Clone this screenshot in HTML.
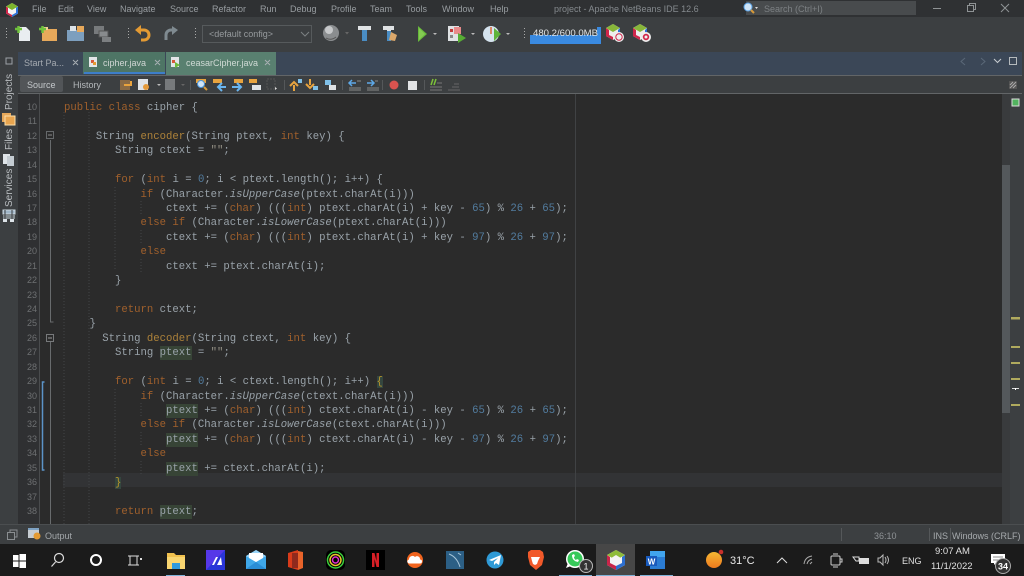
<!DOCTYPE html>
<html><head><meta charset="utf-8">
<style>
html,body{margin:0;padding:0;background:#2b2b2b}
#p{position:relative;width:1024px;height:576px;overflow:hidden;background:#2b2b2b;font-family:"Liberation Sans",sans-serif;filter:blur(.35px)}
.a{position:absolute}
.t{position:absolute;white-space:pre;color:#989da1;font-size:9px;line-height:12px}
.l{position:absolute;left:64px;height:14px;white-space:pre;font:10.63px/14px "Liberation Mono",monospace;color:#99a2a9}
.k{color:#a0602c}.n{color:#527c9f}.f{color:#ad823a}.i{font-style:italic}.s{color:#969286}
.h{background:#374436;display:inline-block;height:14px}
.b{background:#34463f;color:#b8962a}
.g{position:absolute;left:18px;width:19px;text-align:right;font:9px/14px "Liberation Sans",sans-serif;color:#6e7072}
.v{position:absolute;transform:rotate(-90deg);transform-origin:left top;white-space:nowrap;font-size:10px;line-height:12px;color:#b8bcbf}
svg{position:absolute;left:0;top:0}
</style></head><body><div id="p">

<!-- chrome backgrounds -->
<div class="a" style="left:0;top:0;width:1024px;height:17px;background:#2f3133"></div>
<div class="a" style="left:0;top:17px;width:1024px;height:35px;background:#3c3f41"></div>
<div class="a" style="left:0;top:52px;width:1024px;height:23px;background:#3b4757"></div>
<div class="a" style="left:0;top:52px;width:18px;height:490px;background:#3c3f41"></div>
<div class="a" style="left:83px;top:52px;width:82px;height:22px;background:#4e7565"></div>
<div class="a" style="left:84px;top:72px;width:81px;height:2px;background:#3d7ec9"></div>
<div class="a" style="left:166px;top:52px;width:110px;height:23px;background:#598070"></div>
<div class="a" style="left:18px;top:75px;width:1006px;height:19px;background:#3c3f41;border-top:1px solid #626567;border-bottom:1px solid #626567;box-sizing:border-box"></div>
<div class="a" style="left:20px;top:76px;width:43px;height:16px;background:#525558;border-radius:2px"></div>
<div class="a" style="left:18px;top:94px;width:22px;height:430px;background:#2f3032;border-right:1px solid #4a4c4e;box-sizing:border-box"></div>
<div class="a" style="left:40px;top:94px;width:962px;height:430px;background:#2b2b2b"></div>
<div class="a" style="left:63px;top:473px;width:940px;height:14px;background:#323335"></div>
<div class="a" style="left:575px;top:94px;width:1px;height:430px;background:#404244"></div>
<div class="a" style="left:1002px;top:94px;width:8px;height:430px;background:#393b3d"></div>
<div class="a" style="left:1002px;top:165px;width:8px;height:248px;background:#54585b"></div>
<div class="a" style="left:1010px;top:94px;width:14px;height:430px;background:#3c3f41"></div>
<div class="a" style="left:1022px;top:52px;width:2px;height:490px;background:#3c3f41"></div>
<div class="a" style="left:0;top:524px;width:1024px;height:20px;background:#3c3f41;border-top:1px solid #4b4e50;box-sizing:border-box"></div>
<div class="a" style="left:0;top:544px;width:1024px;height:32px;background:#1b1b1b"></div>
<div class="a" style="left:596px;top:544px;width:39px;height:32px;background:#474747"></div>
<div class="a" style="left:746px;top:1px;width:170px;height:14px;background:#484b4d"></div>
<div class="a" style="left:530px;top:27px;width:70px;height:17px;background:#3c3f41"></div>
<div class="a" style="left:530px;top:35px;width:71px;height:9px;background:#3a8ae0"></div>
<div class="a" style="left:597px;top:27px;width:4px;height:9px;background:#3a8ae0"></div>

<!-- menu -->
<div class="t" style="left:32px;top:3px">File</div>
<div class="t" style="left:58px;top:3px">Edit</div>
<div class="t" style="left:87px;top:3px">View</div>
<div class="t" style="left:120px;top:3px">Navigate</div>
<div class="t" style="left:170px;top:3px">Source</div>
<div class="t" style="left:212px;top:3px">Refactor</div>
<div class="t" style="left:260px;top:3px">Run</div>
<div class="t" style="left:290px;top:3px">Debug</div>
<div class="t" style="left:331px;top:3px">Profile</div>
<div class="t" style="left:370px;top:3px">Team</div>
<div class="t" style="left:406px;top:3px">Tools</div>
<div class="t" style="left:442px;top:3px">Window</div>
<div class="t" style="left:490px;top:3px">Help</div>
<div class="t" style="left:554px;top:3px;color:#858a8e">project - Apache NetBeans IDE 12.6</div>
<div class="t" style="left:764px;top:3px;color:#7d8184">Search (Ctrl+I)</div>

<!-- config combo -->
<div class="a" style="left:202px;top:25px;width:108px;height:16px;border:1px solid #565a5c;box-sizing:content-box;background:#3c3f41"></div>
<div class="t" style="left:209px;top:28px;color:#969a9d">&lt;default config&gt;</div>
<div class="t" style="left:533px;top:28px;color:#dfe3e6;font-size:9.600px">480.2/600.0MB</div>

<!-- tabs -->
<div class="t" style="left:24px;top:57px;color:#a5aab0">Start Pa...</div>
<div class="t" style="left:103px;top:57px;color:#d0d6d4">cipher.java</div>
<div class="t" style="left:186px;top:57px;color:#d0dad5">ceasarCipher.java</div>
<div class="t" style="left:27px;top:79px;color:#c4c8cb">Source</div>
<div class="t" style="left:73px;top:79px;color:#b5b9bc">History</div>

<!-- side -->
<div class="v" style="left:4px;top:110px">Projects</div>
<div class="v" style="left:4px;top:150px">Files</div>
<div class="v" style="left:4px;top:207px">Services</div>

<!-- output/status -->
<div class="t" style="left:45px;top:530px;color:#a3a7aa">Output</div>
<div class="t" style="left:874px;top:530px;color:#8f9396">36:10</div>
<div class="t" style="left:933px;top:530px;color:#a6aaad">INS</div>
<div class="t" style="left:952px;top:530px;color:#a6aaad">Windows (CRLF)</div>

<!-- line numbers -->
<div class="g" style="top:100px">10</div><div class="g" style="top:114px">11</div><div class="g" style="top:129px">12</div><div class="g" style="top:143px">13</div><div class="g" style="top:158px">14</div><div class="g" style="top:172px">15</div><div class="g" style="top:187px">16</div><div class="g" style="top:201px">17</div><div class="g" style="top:215px">18</div><div class="g" style="top:230px">19</div><div class="g" style="top:244px">20</div><div class="g" style="top:259px">21</div><div class="g" style="top:273px">22</div><div class="g" style="top:288px">23</div><div class="g" style="top:302px">24</div><div class="g" style="top:316px">25</div><div class="g" style="top:331px">26</div><div class="g" style="top:345px">27</div><div class="g" style="top:360px">28</div><div class="g" style="top:374px">29</div><div class="g" style="top:389px">30</div><div class="g" style="top:403px">31</div><div class="g" style="top:417px">32</div><div class="g" style="top:432px">33</div><div class="g" style="top:446px">34</div><div class="g" style="top:461px">35</div><div class="g" style="top:475px">36</div><div class="g" style="top:490px">37</div><div class="g" style="top:504px">38</div>

<!-- code -->
<div class="l" style="top:101px"><span class="k">public class</span> cipher {</div>
<div class="l" style="top:130px">     String <span class="f">encoder</span>(String ptext, <span class="k">int</span> key) {</div>
<div class="l" style="top:144px">        String ctext = <span class="s">""</span>;</div>
<div class="l" style="top:173px">        <span class="k">for</span> (<span class="k">int</span> i = <span class="n">0</span>; i &lt; ptext.length(); i++) {</div>
<div class="l" style="top:188px">            <span class="k">if</span> (Character.<span class="i">isUpperCase</span>(ptext.charAt(i)))</div>
<div class="l" style="top:202px">                ctext += (<span class="k">char</span>) (((<span class="k">int</span>) ptext.charAt(i) + key - <span class="n">65</span>) % <span class="n">26</span> + <span class="n">65</span>);</div>
<div class="l" style="top:216px">            <span class="k">else if</span> (Character.<span class="i">isLowerCase</span>(ptext.charAt(i)))</div>
<div class="l" style="top:231px">                ctext += (<span class="k">char</span>) (((<span class="k">int</span>) ptext.charAt(i) + key - <span class="n">97</span>) % <span class="n">26</span> + <span class="n">97</span>);</div>
<div class="l" style="top:245px">            <span class="k">else</span></div>
<div class="l" style="top:260px">                ctext += ptext.charAt(i);</div>
<div class="l" style="top:274px">        }</div>
<div class="l" style="top:303px">        <span class="k">return</span> ctext;</div>
<div class="l" style="top:317px">    }</div>
<div class="l" style="top:332px">      String <span class="f">decoder</span>(String ctext, <span class="k">int</span> key) {</div>
<div class="l" style="top:346px">        String <span class="h">ptext</span> = <span class="s">""</span>;</div>
<div class="l" style="top:375px">        <span class="k">for</span> (<span class="k">int</span> i = <span class="n">0</span>; i &lt; ctext.length(); i++) <span class="b">{</span></div>
<div class="l" style="top:390px">            <span class="k">if</span> (Character.<span class="i">isUpperCase</span>(ctext.charAt(i)))</div>
<div class="l" style="top:404px">                <span class="h">ptext</span> += (<span class="k">char</span>) (((<span class="k">int</span>) ctext.charAt(i) - key - <span class="n">65</span>) % <span class="n">26</span> + <span class="n">65</span>);</div>
<div class="l" style="top:418px">            <span class="k">else if</span> (Character.<span class="i">isLowerCase</span>(ctext.charAt(i)))</div>
<div class="l" style="top:433px">                <span class="h">ptext</span> += (<span class="k">char</span>) (((<span class="k">int</span>) ctext.charAt(i) - key - <span class="n">97</span>) % <span class="n">26</span> + <span class="n">97</span>);</div>
<div class="l" style="top:447px">            <span class="k">else</span></div>
<div class="l" style="top:462px">                <span class="h">ptext</span> += ctext.charAt(i);</div>
<div class="l" style="top:476px">        <span class="b">}</span></div>
<div class="l" style="top:505px">        <span class="k">return</span> <span class="h">ptext</span>;</div>

<!-- taskbar text -->
<div class="t" style="left:730px;top:555px;color:#e8e8e8;font-size:11px">31°C</div>
<div class="t" style="left:902px;top:555px;color:#e0e0e0;font-size:9px">ENG</div>
<div class="t" style="left:935px;top:546px;color:#e0e0e0;font-size:9.500px">9:07 AM</div>
<div class="t" style="left:931px;top:561px;color:#e0e0e0;font-size:9.500px">11/1/2022</div>

<svg width="1024" height="576" viewBox="0 0 1024 576">
<!-- NB logo -->
<g id="nb"><path d="M12 3l6 3.500v7L12 17l-6-3.500v-7z" fill="#f4f4f4"/><path d="M12 3l6 3.500-6 3.500-6-3.500z" fill="#7db52d"/><path d="M6 6.500l2 1.200v5l4 2.300V17l-6-3.500z" fill="#d0264a"/><path d="M18 6.500v7L12 17v-2l4-2.300v-5z" fill="#2d72d9"/></g>
<!-- window controls -->
<path d="M933 8.500h8" stroke="#8f9395"/>
<path d="M967.500 5.500h6v6h-6zM969.500 5.500v-2h6v6h-2" fill="none" stroke="#8f9395"/>
<path d="M1001 4l8 8M1009 4l-8 8" stroke="#8f9395"/>
<circle cx="748" cy="7" r="4" fill="#cfe4f7" stroke="#5ca3e6"/><path d="M751 10l3 3" stroke="#d79a3a" stroke-width="2"/><path d="M755 7h3l-1.500 2z" fill="#ddd"/>
<!-- toolbar grips -->
<path d="M6 28v1M6 31v1M6 34v1M6 37v1M128 28v1M128 31v1M128 34v1M128 37v1M195 28v1M195 31v1M195 34v1M195 37v1M524 28v1M524 31v1M524 34v1M524 37v1" stroke="#aaa" transform="translate(.5 0)"/>
<!-- new file -->
<path d="M19 27h7l4 4v10H19z" fill="#e9edf0"/><path d="M15 29h7M18.500 26v7" stroke="#6fc13c" stroke-width="2.500"/>
<!-- new project -->
<path d="M42 29h15v12H42z" fill="#e7a95b"/><path d="M42 27h6v3h-6z" fill="#f3cf94"/><path d="M39 29h7M42.500 26v7" stroke="#6fc13c" stroke-width="2.500"/>
<!-- open project -->
<path d="M67 30h17v11H67z" fill="#7d9fbe"/><path d="M70 26h6v5h-6z" fill="#dde3e8"/><path d="M77 26h7v6h-7z" fill="#e7a95b"/>
<!-- save all (disabled) -->
<path d="M94 26h10v8H94z" fill="#777a7c"/><path d="M99 31h9v6h-9z" fill="#888b8d" stroke="#555"/><path d="M102 37h9v5h-9z" fill="#7c7f81"/>
<!-- undo / redo -->
<path d="M138 30h6a5 5 0 0 1 0 10h-3" fill="none" stroke="#e39a33" stroke-width="3"/><path d="M141 25l-6 5 6 5z" fill="#e39a33"/>
<path d="M176 30h-5a5 5 0 0 0-5 5v5" fill="none" stroke="#7f8a90" stroke-width="3"/><path d="M172 26l6 4-6 5z" fill="#7f8a90"/>
<!-- combo arrow -->
<path d="M301 32l4 4 4-4" fill="none" stroke="#7c8083"/>
<!-- globe -->
<circle cx="331" cy="33" r="8" fill="#8a8d8f"/><circle cx="329" cy="30" r="4" fill="#c6c8ca"/><path d="M326 38q5 3 10-1" stroke="#555" fill="none"/>
<path d="M345 32h4l-2 2.500z" fill="#666"/>
<!-- hammer -->
<path d="M358 26h13v4h-4v1h-5v-1h-4z" fill="#e0e3e5"/><rect x="362" y="30" width="5" height="11" fill="#4a8dc4"/>
<!-- clean -->
<path d="M383 26h11v4h-3v1h-4v-1h-4z" fill="#dfe2e4"/><rect x="387" y="31" width="4" height="10" fill="#4a8dc4"/><path d="M391 32l6 3-2 6-6-1z" fill="#dba86b"/>
<!-- run -->
<path d="M418 26l9 8-9 8z" fill="#67b93b"/><path d="M419 28l6 6-6 6z" fill="#a2dc6a" opacity=".5"/>
<path d="M433 33h4l-2 2z M471 33h4l-2 2z M506 33h4l-2 2z" fill="#bbb"/>
<!-- debug -->
<rect x="448" y="26" width="11" height="15" fill="#dfe2e4"/><rect x="450" y="29" width="3" height="3" fill="#c43a3a"/><path d="M454 27h7v7h-7z" fill="#e88a8a"/><rect x="450" y="35" width="3" height="3" fill="#888"/><path d="M458 33l8 5-8 5z" fill="#57ad34"/>
<!-- profile -->
<circle cx="491" cy="34" r="8" fill="#d6e4ef"/><path d="M491 27v7" stroke="#d86a3a" stroke-width="1.500"/><path d="M494 28l7 6-7 7z" fill="#5eb43a"/>
<!-- small cubes -->
<g transform="translate(604 22)"><path d="M9 2l7 4v8l-7 4-7-4V6z" fill="#eee"/><path d="M9 2l7 4-7 4-7-4z" fill="#87b63a"/><path d="M2 6l3 2v5l4 2v3l-7-4z" fill="#d0264a"/><path d="M16 6v8l-2 1V8z" fill="#2d72d9"/><circle cx="15" cy="15" r="5" fill="#eee"/><circle cx="15" cy="15" r="3.200" fill="none" stroke="#d0264a"/></g>
<g transform="translate(631 22)"><path d="M9 2l7 4v8l-7 4-7-4V6z" fill="#eee"/><path d="M9 2l7 4-7 4-7-4z" fill="#87b63a"/><path d="M2 6l3 2v5l4 2v3l-7-4z" fill="#d0264a"/><path d="M16 6v8l-2 1V8z" fill="#2d72d9"/><circle cx="15" cy="15" r="5" fill="#eee"/><circle cx="15" cy="15" r="3.200" fill="#d0264a"/><circle cx="15" cy="15" r="1.500" fill="#eee"/></g>
<!-- tab row -->
<path d="M6 58h6v6H6z" fill="none" stroke="#9da2a6"/>
<path d="M73 60l5 5M78 60l-5 5M155 60l5 5M160 60l-5 5M265 60l5 5M270 60l-5 5" stroke="#a9b0b4"/>
<rect x="89" y="57" width="8" height="10" fill="#e3e6e8"/><rect x="91" y="60" width="3" height="3" fill="#d65a3a"/><rect x="93" y="62" width="3" height="3" fill="#e39a33"/>
<rect x="171" y="57" width="8" height="10" fill="#e3e6e8"/><rect x="172" y="60" width="3" height="3" fill="#d65a3a"/><path d="M175 62l5 3-5 3z" fill="#6dbb3a"/>
<path d="M965 58l-4 3.500 4 3.500M981 58l4 3.500-4 3.500" fill="none" stroke="#5a6878"/>
<path d="M994 59l3.500 3.500 3.500-3.500" fill="none" stroke="#c7ccd0"/>
<rect x="1009.500" y="57.500" width="7" height="7" fill="none" stroke="#b5babd"/>
<!-- editor toolbar icons -->
<path d="M190.500 80v10M284.500 80v10M342.500 80v10M382.500 80v10M424.500 80v10" stroke="#55585a"/>
<rect x="120" y="80" width="10" height="10" fill="#8a6a45"/><path d="M131 81v4h-7" fill="none" stroke="#e9a33d" stroke-width="2"/>
<rect x="138" y="79" width="10" height="11" fill="#dfe3e6"/><circle cx="146" cy="87" r="3" fill="#e49a3a"/>
<path d="M157 84h4l-2 2z" fill="#bbb"/><rect x="165" y="79" width="10" height="11" fill="#777a7c"/><path d="M181 84h4l-2 2z" fill="#666"/>
<rect x="196" y="79" width="10" height="4" fill="#e8a43f"/><circle cx="201" cy="84" r="3.500" fill="#cfe4f7" stroke="#4b96dd"/><path d="M204 87l3 3" stroke="#d79a3a" stroke-width="2"/>
<rect x="213" y="79" width="9" height="4" fill="#e8a43f"/><path d="M226 87h-7M222 83l-4 4 4 4" fill="none" stroke="#6ab5ef" stroke-width="2"/>
<rect x="234" y="79" width="9" height="4" fill="#e8a43f"/><path d="M232 87h8M237 83l4 4-4 4" fill="none" stroke="#6ab5ef" stroke-width="2"/>
<rect x="249" y="79" width="8" height="4" fill="#e8a43f"/><rect x="252" y="85" width="9" height="5" fill="#dfe3e6"/>
<path d="M267 79h8v10h-8z" fill="none" stroke="#555" stroke-dasharray="2 1"/><path d="M275 87l2 1.500-2 1.500z" fill="#ddd"/>
<path d="M294 91v-6M290 86l4-4 4 4" fill="none" stroke="#e8a43f" stroke-width="2"/><path d="M298 79h4v4h-4z" fill="#7fc0e8"/>
<path d="M310 79v6M306 84l4 4 4-4" fill="none" stroke="#e8a43f" stroke-width="2"/><path d="M313 86h5v4h-5z" fill="#7fc0e8"/>
<rect x="325" y="80" width="6" height="5" fill="#7fc0e8"/><rect x="329" y="85" width="7" height="5" fill="#dfe3e6"/>
<path d="M356 83h-7M352 80l-3 3 3 3" fill="none" stroke="#5ea9e8" stroke-width="1.500"/><path d="M357 81h4M349 88h12M349 90h12" stroke="#888"/>
<path d="M367 83h7M371 80l3 3-3 3" fill="none" stroke="#5ea9e8" stroke-width="1.500"/><path d="M375 81h3M367 88h12M367 90h12" stroke="#888"/>
<circle cx="394" cy="85" r="4.500" fill="#d9534f"/>
<rect x="408" y="81" width="9" height="9" fill="#e2e4e5"/>
<path d="M431 85l2-6M434 85l2-6" stroke="#7cc23a" stroke-width="1.500"/><path d="M430 87h12M430 90h12M437 83h5" stroke="#777"/>
<path d="M452 87h7M448 90h12M454 84h5" stroke="#666"/>
<rect x="1009" y="81" width="8" height="8" fill="#555"/><path d="M1010 88l6-6M1010 85l3-3M1013 88l3-3" stroke="#aaa"/>
<!-- sidebar icons -->
<path d="M2 113h9v9H2z" fill="#e6a85a"/><path d="M5 116h10v9H5z" fill="#e8a54f" stroke="#fde0ac"/>
<path d="M3 154h7v10H3z" fill="#dfe4e8"/><path d="M7 156h7v10H7z" fill="#c4ccd2"/>
<path d="M3 210h12v4H3zM3 216h12M3 218h12" fill="#9fb5c7" stroke="#cdd8e0"/><path d="M5 210v11M12 210v11" stroke="#3c3f41"/><path d="M3 219h4v3H3zM10 219h4v3h-4z" fill="#dde3e8"/>
<!-- fold markers -->
<rect x="46.500" y="131.500" width="7" height="7" fill="none" stroke="#66696b"/><path d="M48 135h4" stroke="#888"/>
<path d="M50.500 140V322h3" fill="none" stroke="#686b6d"/>
<rect x="46.500" y="334.500" width="7" height="7" fill="none" stroke="#77797b"/><path d="M48 338h4" stroke="#999"/>
<path d="M50.500 342V524" stroke="#686b6d"/>
<path d="M44.500 382h-2v88h2" fill="none" stroke="#5c94c8" stroke-width="1.500"/>
<!-- indent guides -->
<g stroke="#434547" stroke-dasharray="1 2">
<path d="M64 112V524M89 112V524M115 187V270M115 389V470M141 201V214M141 230V243M141 259V272M141 403V416M141 432V445M141 461V474"/>
</g>
<!-- right markers -->
<rect x="1012" y="99" width="7" height="7" fill="#52b35f" stroke="#ddd"/>
<g fill="#b0aa5e"><rect x="1011" y="317" width="9" height="2.500"/><rect x="1011" y="346" width="9" height="2"/><rect x="1011" y="362" width="9" height="2"/><rect x="1011" y="378" width="9" height="2"/><rect x="1011" y="404" width="9" height="2"/></g>
<rect x="1012" y="388" width="7" height="1" fill="#ddd"/><rect x="1015" y="388" width="1" height="2" fill="#fff"/>
<!-- status separators -->
<path d="M841.500 528v13M929.500 528v13M950.500 528v13" stroke="#55585a"/>
<!-- output -->
<rect x="7.500" y="532.500" width="7" height="7" fill="none" stroke="#8a8e91"/><path d="M10 532v-2h7v7h-2" fill="none" stroke="#8a8e91"/>
<rect x="28" y="528" width="11" height="10" fill="#c6ccd1"/><rect x="28" y="528" width="11" height="2" fill="#7fa3c4"/><circle cx="37" cy="536" r="3.500" fill="#e39a33"/>
<!-- taskbar -->
<g fill="#fff"><rect x="13" y="555" width="5.500" height="5.500"/><rect x="19.500" y="554" width="6.500" height="6.500"/><rect x="13" y="561.500" width="5.500" height="5.500"/><rect x="19.500" y="561.500" width="6.500" height="6.500"/></g>
<circle cx="59" cy="558" r="4.500" fill="none" stroke="#ddd" stroke-width="1.200"/><path d="M55.500 562l-4 4.500" stroke="#ddd" stroke-width="1.200"/>
<circle cx="96" cy="560" r="5" fill="none" stroke="#fff" stroke-width="2"/>
<path d="M130 556h7v9h-7zM128 556h11M128 565h11" fill="none" stroke="#ddd"/><rect x="140" y="558" width="2" height="2" fill="#ddd"/>
<!-- explorer -->
<path d="M167 553h7l2 2h9v14h-18z" fill="#f1c14e"/><path d="M167 557h18v12h-18z" fill="#f9d671"/><rect x="172" y="563" width="8" height="6" fill="#2f9ae0"/>
<!-- app -->
<rect x="206" y="550" width="19" height="20" fill="#2a35d8"/><path d="M206 550h19L206 570z" fill="#6a3bf0" opacity=".7"/><path d="M212 565l4-8h2l-4 8zM217 565l4-8 1 8z" fill="#fff"/>
<!-- mail -->
<path d="M246 556l10-6 10 6v13h-20z" fill="#3fa7e8"/><path d="M246 556l10 6 10-6v-0l-10-6z" fill="#9bd5f7"/><path d="M249 553h14v5l-7 4-7-4z" fill="#fff"/><path d="M246 569l10-7 10 7z" fill="#2a8dd6"/>
<!-- office -->
<path d="M288 553l10-3v20l-10-3z" fill="#d83b1a"/><path d="M292 553h6v15h-6z" fill="#8f2a1d"/><path d="M298 551l5 1v16l-5 2z" fill="#e8632a"/>
<!-- rainbow app -->
<rect x="326" y="550" width="19" height="20" rx="5" fill="#000"/><circle cx="335.500" cy="560" r="8" fill="none" stroke="#3ccf3c" stroke-width="1.500"/><circle cx="335.500" cy="560" r="5.500" fill="none" stroke="#e9c62b" stroke-width="1.500"/><circle cx="335.500" cy="560" r="3" fill="none" stroke="#e02ccf" stroke-width="1.500"/>
<!-- netflix -->
<rect x="366" y="550" width="19" height="20" fill="#000"/><path d="M372 553h2.500l2 8v-8h2.500v14h-2.500l-2-8v8H372z" fill="#d81f26"/>
<!-- soundcloud -->
<circle cx="415" cy="560" r="8" fill="#f1641e"/><path d="M408 563a2 2 0 0 1 1-3.500 3.500 3.500 0 0 1 6-2.500 3 3 0 0 1 5 2.500 2 2 0 0 1 0 4h-11z" fill="#fff"/>
<!-- mysql -->
<rect x="446" y="551" width="18" height="18" fill="#2c5f85"/><path d="M449 554q8 3 11 13M458 553l3 2" fill="none" stroke="#a6c4d8"/>
<!-- telegram -->
<circle cx="495" cy="560" r="8.500" fill="#2f9ad6"/><path d="M489 560l12-5-2 10-3-2-2 2v-3l4-4-6 3z" fill="#fff"/>
<!-- brave -->
<path d="M528 552l3-2h9l3 2 1 5-2 8-6 5-6-5-2-8z" fill="#f1592a"/><path d="M531 557h9l-2 4-1 3-2 1-2-1-1-3z" fill="#fff"/>
<!-- whatsapp -->
<circle cx="575" cy="559" r="9" fill="#fff"/><circle cx="575" cy="559" r="7.500" fill="#37c95a"/><path d="M566 568l2-5 3 3z" fill="#fff"/><path d="M572 555q0 6 6 7l1-2-2-1-1 1q-2-1-2-3l1-1-1-2z" fill="#fff"/>
<circle cx="586" cy="566" r="6.500" fill="#333" stroke="#bbb"/><text x="586" y="569.500" font-size="9" fill="#eee" text-anchor="middle" font-family="Liberation Sans">1</text>
<!-- netbeans taskbar -->
<g transform="translate(606 550)"><path d="M10 0l9 5v10l-9 5-9-5V5z" fill="#f4f4f4"/><path d="M10 0l9 5-9 5-9-5z" fill="#8fbc3a"/><path d="M1 5l3 2v6l6 3v4l-9-5z" fill="#c9254a"/><path d="M19 5v10l-9 5v-4l6-3V7z" fill="#2d6fd0"/><path d="M10 5l4 2.500v5L10 15l-4-2.500v-5z" fill="#f4f4f4"/></g>
<!-- word -->
<rect x="650" y="551" width="15" height="18" fill="#2b7cd3"/><rect x="650" y="551" width="15" height="6" fill="#41a5ee"/><rect x="646" y="556" width="11" height="10" fill="#185abd"/><text x="651.500" y="564.500" font-size="8" font-weight="bold" fill="#fff" text-anchor="middle" font-family="Liberation Sans">W</text>
<!-- taskbar underlines -->
<g fill="#7fb3d9"><rect x="166" y="575" width="19" height="1"/><rect x="559" y="575" width="33" height="1"/><rect x="596" y="575" width="39" height="1"/><rect x="640" y="575" width="33" height="1"/></g>
<!-- weather -->
<defs><linearGradient id="su" x1="0" y1="0" x2="0" y2="1"><stop offset="0" stop-color="#f7b733"/><stop offset="1" stop-color="#ee7a1e"/></linearGradient></defs>
<circle cx="714" cy="560" r="8" fill="url(#su)"/><circle cx="721" cy="552" r="2.300" fill="#c9302c"/>
<!-- tray -->
<path d="M777 563l5-5 5 5" fill="none" stroke="#ddd"/>
<path d="M804 564q1-7 8-8M807 564q1-4 5-5M810 564q1-1 2-2" fill="none" stroke="#aaa"/>
<rect x="831" y="556" width="9" height="9" fill="none" stroke="#ccc" rx="1"/><path d="M840 559h2v3h-2M833 554h5M833 567h5" fill="none" stroke="#ccc"/>
<rect x="859" y="558" width="10" height="6" fill="#ddd"/><path d="M853 557h6v4h-3z" fill="none" stroke="#ddd"/>
<path d="M878 558h2l3-3v10l-3-3h-2z" fill="none" stroke="#bbb"/><path d="M885 557q2 3 0 6M887 556q3 4 0 8" fill="none" stroke="#bbb"/>
<path d="M991 554h14v9h-9l-2 2v-2h-3z" fill="#fff"/><path d="M993 557h10M993 560h10" stroke="#888"/>
<circle cx="1003" cy="566" r="7.500" fill="#333" stroke="#aaa"/><text x="1003" y="569.500" font-size="9" font-weight="bold" fill="#fff" text-anchor="middle" font-family="Liberation Sans">34</text>
</svg>
</div></body></html>
